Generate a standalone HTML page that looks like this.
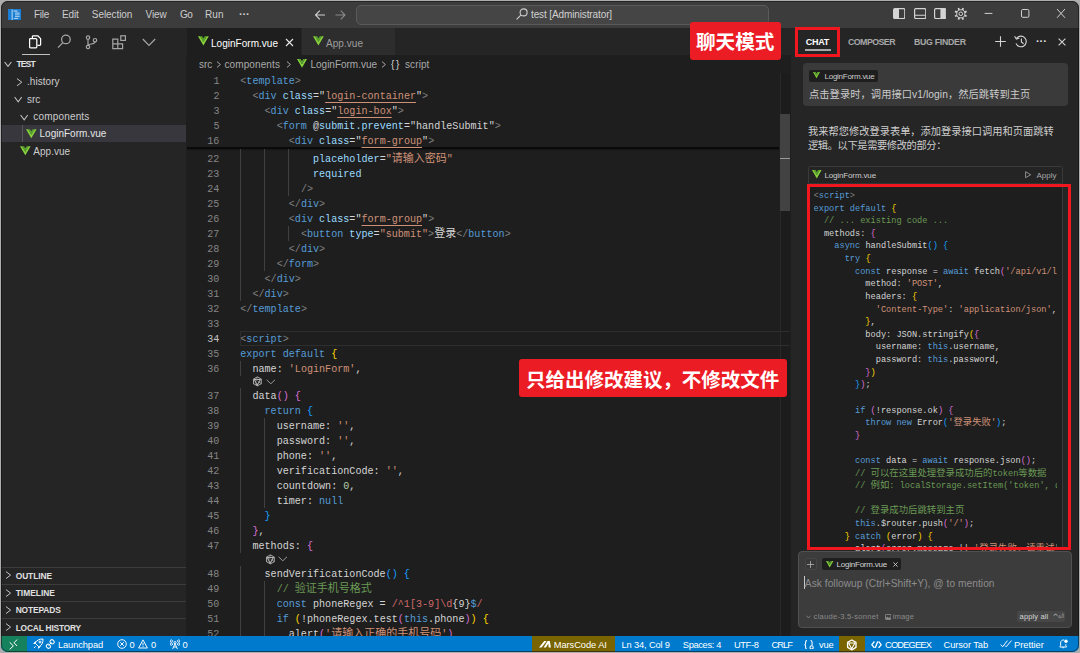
<!DOCTYPE html>
<html lang="zh"><head><meta charset="utf-8"><title>test [Administrator]</title>
<style>
html,body{margin:0;padding:0;}
body{width:1080px;height:653px;overflow:hidden;background:#adadad;font-family:"Liberation Sans","Noto Sans CJK SC",sans-serif;position:relative;}
.a{position:absolute;}
.t{white-space:pre;}
#win{position:absolute;left:1px;top:1px;width:1078px;height:651px;border-radius:7px;overflow:hidden;background:#1e1e1e;}
#in{position:absolute;left:-1px;top:-1px;width:1080px;height:653px;}
.code{font-family:"Liberation Mono","Noto Sans CJK SC",monospace;white-space:pre;color:#d4d4d4;}
.ed{font-size:10.1px;line-height:15px;height:15px;}
.ed .z{line-height:0;font-size:11px;font-family:"Noto Sans CJK SC",sans-serif;}
.rp{font-size:8.63px;line-height:12.62px;height:12.62px;}
.rp .z{line-height:0;font-size:9.4px;font-family:"Noto Sans CJK SC",sans-serif;}
.g{color:#808080}.b{color:#569cd6}.at{color:#9cdcfe}.s{color:#ce9178}.w{color:#d4d4d4}
.y{color:#ffd700}.p{color:#da70d6}.B{color:#179fff}.c{color:#6a9955}.n{color:#b5cea8}.r{color:#d16969}
.u{text-decoration:underline;text-decoration-thickness:1px;text-underline-offset:2.9px;text-decoration-skip-ink:none;}
</style></head>
<body><div id="win"><div id="in">
<div class="a" style="left:0px;top:0px;width:1080px;height:27.5px;background:#3c3c3c;"></div>
<div class="a" style="left:0px;top:27.5px;width:186px;height:608px;background:#252526;"></div>
<div class="a" style="left:186px;top:27.5px;width:605px;height:27.5px;background:#252526;"></div>
<div class="a" style="left:186px;top:55px;width:605px;height:581px;background:#1e1e1e;"></div>
<div class="a" style="left:791px;top:27.5px;width:289px;height:608px;background:#252526;"></div>
<div class="a" style="left:0px;top:635.5px;width:1080px;height:18px;background:#007acc;"></div>
<svg class="a" style="left:8px;top:8.8px;" width="13" height="11.4" viewBox="0 0 13 11.4"><rect width="13" height="11.4" fill="#1a7fd4"/><rect x="3.6" y="0.4" width="1.1" height="10.6" fill="#a9d3f3"/><rect x="5.6" y="1.6" width="4" height="0.9" fill="#fff" opacity=".9"/><rect x="7" y="3.6" width="4.6" height="0.9" fill="#fff" opacity=".8"/><rect x="7" y="5.4" width="4.6" height="0.9" fill="#fff" opacity=".7"/><rect x="7" y="7.2" width="4.6" height="0.9" fill="#fff" opacity=".7"/><rect x="5.8" y="9" width="4.4" height="0.9" fill="#fff" opacity=".7"/></svg>
<span class="a t" style="letter-spacing:-0.281px;top:7.90px;font-size:10px;line-height:14px;color:#cccccc;left:34px;">File</span>
<span class="a t" style="letter-spacing:-0.159px;top:7.90px;font-size:10px;line-height:14px;color:#cccccc;left:62px;">Edit</span>
<span class="a t" style="letter-spacing:-0.071px;top:7.90px;font-size:10px;line-height:14px;color:#cccccc;left:91.8px;">Selection</span>
<span class="a t" style="letter-spacing:-0.100px;top:7.90px;font-size:10px;line-height:14px;color:#cccccc;left:145.5px;">View</span>
<span class="a t" style="letter-spacing:-0.422px;top:7.90px;font-size:10px;line-height:14px;color:#cccccc;left:180px;">Go</span>
<span class="a t" style="letter-spacing:0.047px;top:7.90px;font-size:10px;line-height:14px;color:#cccccc;left:205px;">Run</span>
<span class="a t" style="letter-spacing:-0.167px;top:7.20px;font-size:11px;line-height:14px;color:#cccccc;left:239px;font-weight:bold;">···</span>
<svg class="a" style="left:314px;top:9px;" width="34" height="12" viewBox="0 0 34 12"><g fill="none" stroke="#d0d0d0" stroke-width="1.1"><path d="M1.5 6H11M5.8 1.6 1.5 6l4.3 4.4"/></g><g fill="none" stroke="#8a8a8a" stroke-width="1.1"><path d="M21.5 6H31M26.7 1.6 31 6l-4.3 4.4"/></g></svg>
<div class="a" style="left:356px;top:5px;width:413px;height:19.5px;background:#454545;border:1px solid #5a5a5a;border-radius:5px;box-sizing:border-box;"></div>
<svg class="a" style="left:516px;top:8.2px;" width="12" height="12" viewBox="0 0 12 12"><g fill="none" stroke="#cfcfcf" stroke-width="1.1"><circle cx="7.6" cy="4.4" r="3.5"/><path d="M5.1 6.9.6 11.4"/></g></svg>
<span class="a t" style="letter-spacing:-0.118px;top:8.10px;font-size:10px;line-height:14px;color:#d0d0d0;left:531px;">test [Administrator]</span>
<svg class="a" style="left:893px;top:8.3px;" width="12.4" height="11.2" viewBox="0 0 12.4 11.2"><rect x=".6" y=".6" width="11.2" height="10" rx="1.3" fill="none" stroke="#d4d4d4" stroke-width="1.2"/><rect x="1" y="1" width="5" height="9.2" fill="#d4d4d4"/></svg>
<svg class="a" style="left:913.6px;top:8.3px;" width="12.4" height="11.2" viewBox="0 0 12.4 11.2"><rect x=".6" y=".6" width="11.2" height="10" rx="1.3" fill="none" stroke="#d4d4d4" stroke-width="1.2"/><path d="M.6 7.2H11.8" stroke="#d4d4d4" stroke-width="1.1"/></svg>
<svg class="a" style="left:934px;top:8.3px;" width="12.4" height="11.2" viewBox="0 0 12.4 11.2"><rect x=".6" y=".6" width="11.2" height="10" rx="1.3" fill="none" stroke="#d4d4d4" stroke-width="1.2"/><rect x="6.4" y="1" width="5" height="9.2" fill="#d4d4d4"/></svg>
<svg class="a" style="left:954px;top:7px;" width="13.6" height="13.6" viewBox="0 0 13.6 13.6"><g fill="none" stroke="#d4d4d4"><g stroke-width="1.7"><path d="M10.77 8.45L12.62 9.21"/><path d="M8.45 10.77L9.21 12.62"/><path d="M5.15 10.77L4.39 12.62"/><path d="M2.83 8.45L0.98 9.21"/><path d="M2.83 5.15L0.98 4.39"/><path d="M5.15 2.83L4.39 0.98"/><path d="M8.45 2.83L9.21 0.98"/><path d="M10.77 5.15L12.62 4.39"/></g><circle cx="6.8" cy="6.8" r="4.1" stroke-width="1"/><circle cx="6.8" cy="6.8" r="1.8" stroke-width="1"/></g></svg>
<svg class="a" style="left:984px;top:8px;" width="84" height="12" viewBox="0 0 84 12"><g fill="none" stroke="#d0d0d0" stroke-width="1"><path d="M.6 5.4H8.4"/><rect x="37.5" y="1.5" width="7.4" height="7.8" rx="1.2"/><path d="M73 1 81 9.8M81 1 73 9.8"/></g></svg>
<svg class="a" style="left:28.4px;top:35px;" width="14" height="14" viewBox="0 0 14 14"><g fill="none" stroke="#ffffff" stroke-width="1.25" stroke-linejoin="round"><path d="M4.4 3.2V1.6a.8.8 0 0 1 .8-.8h4.6L12.6 3.6v6a.8.8 0 0 1-.8.8H9.4"/><path d="M1.8 3.4h5.6a.8.8 0 0 1 .8.8v7.6a.8.8 0 0 1-.8.8H1.8a.8.8 0 0 1-.8-.8V4.2a.8.8 0 0 1 .8-.8z" transform="translate(.6 .2)"/></g></svg>
<svg class="a" style="left:56.5px;top:34px;" width="15" height="15" viewBox="0 0 15 15"><g fill="none" stroke="#a6a6a6" stroke-width="1.25"><circle cx="8.9" cy="5.4" r="4.3"/><path d="M5.9 8.6 1 13.6"/></g></svg>
<svg class="a" style="left:85px;top:34.5px;" width="13" height="15" viewBox="0 0 13 15"><g fill="none" stroke="#a6a6a6" stroke-width="1.2"><circle cx="3" cy="2.6" r="1.7"/><circle cx="3" cy="12" r="1.7"/><circle cx="10" cy="5.2" r="1.7"/><path d="M3 4.3v6M10 6.9c0 2.6-7 1.6-7 3.6"/></g></svg>
<svg class="a" style="left:112px;top:34.5px;" width="15" height="15" viewBox="0 0 15 15"><g fill="none" stroke="#a6a6a6" stroke-width="1.2"><path d="M.8 4.2h5v9.4h-5zM.8 8.8h9.8v4.8H.8M5.8 8.8h4.8v4.8"/><rect x="8.8" y=".8" width="4.6" height="4.6"/></g></svg>
<svg class="a" style="left:141.5px;top:38px;" width="14" height="9" viewBox="0 0 14 9"><path d="M.8 1 7 7.4 13.2 1" fill="none" stroke="#a6a6a6" stroke-width="1.2"/></svg>
<div class="a" style="left:22px;top:53.8px;width:28px;height:1.4px;background:#c0c0c0;"></div>
<svg class="a" style="left:4.2px;top:60.400000000000006px;" width="8" height="8" viewBox="0 0 8 8"><path d="M.6 2 4.0 6.4 7.4 2" fill="none" stroke="#c5c5c5" stroke-width="1.05"/></svg>
<span class="a t" style="letter-spacing:-0.892px;top:57.20px;font-size:8.6px;line-height:14px;color:#e0e0e0;left:16.4px;font-weight:bold;">TEST</span>
<svg class="a" style="left:14.6px;top:77.6px;" width="8.4" height="8.4" viewBox="0 0 8.4 8.4"><path d="M2 .6 6.800000000000001 4.2 2 7.800000000000001" fill="none" stroke="#c5c5c5" stroke-width="1"/></svg>
<span class="a t" style="letter-spacing:0.046px;top:75.20px;font-size:10px;line-height:14px;color:#cccccc;left:27px;">.history</span>
<svg class="a" style="left:13.8px;top:95.2px;" width="8.4" height="8.4" viewBox="0 0 8.4 8.4"><path d="M.6 2 4.2 6.800000000000001 7.800000000000001 2" fill="none" stroke="#c5c5c5" stroke-width="1.05"/></svg>
<span class="a t" style="letter-spacing:-0.015px;top:92.70px;font-size:10px;line-height:14px;color:#cccccc;left:27px;">src</span>
<svg class="a" style="left:19.8px;top:112.6px;" width="8.4" height="8.4" viewBox="0 0 8.4 8.4"><path d="M.6 2 4.2 6.800000000000001 7.800000000000001 2" fill="none" stroke="#c5c5c5" stroke-width="1.05"/></svg>
<span class="a t" style="letter-spacing:0.172px;top:110.10px;font-size:10px;line-height:14px;color:#cccccc;left:33.3px;">components</span>
<div class="a" style="left:1px;top:125px;width:185px;height:17px;background:#37373d;"></div>
<div class="a" style="left:22px;top:125px;width:1px;height:17px;background:#585858;"></div>
<svg class="a" style="left:26.2px;top:128.683px;overflow:visible;" width="10.6" height="9.434" viewBox="0 0 20 17.3"><path d="M0 0h3.9L10 10.4 16.1 0H20L10 17.3z" fill="#86d13c"/><path d="M3.9 0h3.6L10 4.4 12.5 0h3.6L10 10.4z" fill="#5aa52c"/></svg>
<span class="a t" style="letter-spacing:0.007px;top:127.40px;font-size:10px;line-height:14px;color:#e6e6e6;left:39.5px;">LoginForm.vue</span>
<svg class="a" style="left:19.8px;top:146.183px;overflow:visible;" width="10.6" height="9.434" viewBox="0 0 20 17.3"><path d="M0 0h3.9L10 10.4 16.1 0H20L10 17.3z" fill="#86d13c"/><path d="M3.9 0h3.6L10 4.4 12.5 0h3.6L10 10.4z" fill="#5aa52c"/></svg>
<span class="a t" style="letter-spacing:0.014px;top:144.90px;font-size:10px;line-height:14px;color:#cccccc;left:33.3px;">App.vue</span>
<div class="a" style="left:1px;top:566.5px;width:185px;height:1px;background:#3c3c3c;"></div>
<svg class="a" style="left:4px;top:571.4px;" width="8.2" height="8.2" viewBox="0 0 8.2 8.2"><path d="M2 .6 6.6 4.1 2 7.6" fill="none" stroke="#c5c5c5" stroke-width="1"/></svg>
<span class="a t" style="letter-spacing:-0.067px;top:568.70px;font-size:8.4px;line-height:14px;color:#e0e0e0;left:15.7px;font-weight:bold;">OUTLINE</span>
<div class="a" style="left:1px;top:583.8px;width:185px;height:1px;background:#3c3c3c;"></div>
<svg class="a" style="left:4px;top:588.6999999999999px;" width="8.2" height="8.2" viewBox="0 0 8.2 8.2"><path d="M2 .6 6.6 4.1 2 7.6" fill="none" stroke="#c5c5c5" stroke-width="1"/></svg>
<span class="a t" style="letter-spacing:0.026px;top:586.00px;font-size:8.4px;line-height:14px;color:#e0e0e0;left:15.7px;font-weight:bold;">TIMELINE</span>
<div class="a" style="left:1px;top:601.1px;width:185px;height:1px;background:#3c3c3c;"></div>
<svg class="a" style="left:4px;top:606.0px;" width="8.2" height="8.2" viewBox="0 0 8.2 8.2"><path d="M2 .6 6.6 4.1 2 7.6" fill="none" stroke="#c5c5c5" stroke-width="1"/></svg>
<span class="a t" style="letter-spacing:-0.115px;top:603.30px;font-size:8.4px;line-height:14px;color:#e0e0e0;left:15.7px;font-weight:bold;">NOTEPADS</span>
<div class="a" style="left:1px;top:618.4px;width:185px;height:1px;background:#3c3c3c;"></div>
<svg class="a" style="left:4px;top:623.3px;" width="8.2" height="8.2" viewBox="0 0 8.2 8.2"><path d="M2 .6 6.6 4.1 2 7.6" fill="none" stroke="#c5c5c5" stroke-width="1"/></svg>
<span class="a t" style="letter-spacing:-0.191px;top:620.60px;font-size:8.4px;line-height:14px;color:#e0e0e0;left:15.7px;font-weight:bold;">LOCAL HISTORY</span>
<div class="a" style="left:187px;top:27.5px;width:114.5px;height:27.5px;background:#1e1e1e;"></div>
<div class="a" style="left:301.5px;top:27.5px;width:93.5px;height:27.5px;background:#2d2d2d;"></div>
<div class="a" style="left:301px;top:27.5px;width:1px;height:27.5px;background:#252526;"></div>
<svg class="a" style="left:198px;top:35.794000000000004px;overflow:visible;" width="10.8" height="9.612" viewBox="0 0 20 17.3"><path d="M0 0h3.9L10 10.4 16.1 0H20L10 17.3z" fill="#86d13c"/><path d="M3.9 0h3.6L10 4.4 12.5 0h3.6L10 10.4z" fill="#5aa52c"/></svg>
<span class="a t" style="letter-spacing:0.023px;top:36.50px;font-size:10px;line-height:14px;color:#ffffff;left:211px;">LoginForm.vue</span>
<svg class="a" style="left:285px;top:37.8px;" width="9" height="9" viewBox="0 0 9 9"><path d="M1 1 8 8M8 1 1 8" stroke="#e8e8e8" stroke-width="1.1" fill="none"/></svg>
<svg class="a" style="left:313.4px;top:35.794000000000004px;overflow:visible;" width="10.8" height="9.612" viewBox="0 0 20 17.3"><path d="M0 0h3.9L10 10.4 16.1 0H20L10 17.3z" fill="#86d13c"/><path d="M3.9 0h3.6L10 4.4 12.5 0h3.6L10 10.4z" fill="#5aa52c"/></svg>
<span class="a t" style="letter-spacing:0.042px;top:36.50px;font-size:10px;line-height:14px;color:#9d9d9d;left:326px;">App.vue</span>
<span class="a t" style="letter-spacing:-0.015px;top:58.20px;font-size:10px;line-height:14px;color:#a9a9a9;left:199px;">src</span>
<svg class="a" style="left:215px;top:61.099999999999994px;" width="7" height="7" viewBox="0 0 7 7"><path d="M2 .6 5.4 3.5 2 6.4" fill="none" stroke="#a9a9a9" stroke-width="1"/></svg>
<span class="a t" style="letter-spacing:0.102px;top:58.20px;font-size:10px;line-height:14px;color:#a9a9a9;left:224.5px;">components</span>
<svg class="a" style="left:284.5px;top:61.099999999999994px;" width="7" height="7" viewBox="0 0 7 7"><path d="M2 .6 5.4 3.5 2 6.4" fill="none" stroke="#a9a9a9" stroke-width="1"/></svg>
<svg class="a" style="left:297px;top:59.15px;overflow:visible;" width="10" height="8.9" viewBox="0 0 20 17.3"><path d="M0 0h3.9L10 10.4 16.1 0H20L10 17.3z" fill="#86d13c"/><path d="M3.9 0h3.6L10 4.4 12.5 0h3.6L10 10.4z" fill="#5aa52c"/></svg>
<span class="a t" style="letter-spacing:-0.016px;top:58.20px;font-size:10px;line-height:14px;color:#a9a9a9;left:310.5px;">LoginForm.vue</span>
<svg class="a" style="left:380px;top:61.099999999999994px;" width="7" height="7" viewBox="0 0 7 7"><path d="M2 .6 5.4 3.5 2 6.4" fill="none" stroke="#a9a9a9" stroke-width="1"/></svg>
<span class="a t" style="letter-spacing:1.656px;top:57.90px;font-size:10px;line-height:14px;color:#cfcfcf;left:391px;">{}</span>
<span class="a t" style="letter-spacing:0.099px;top:58.20px;font-size:10px;line-height:14px;color:#a9a9a9;left:405px;">script</span>
<span class="a t" style="top:151.60px;font-size:10.05px;line-height:15px;color:#858585;right:860.60px;font-family:'Liberation Mono','Noto Sans CJK SC',monospace;">22</span>
<div class="a code ed" style="left:240.3px;top:151.60px;">            <span class="at">placeholder</span><span class="w">=</span><span class="s">"<span class="z">请输入密码</span>"</span></div>
<span class="a t" style="top:166.60px;font-size:10.05px;line-height:15px;color:#858585;right:860.60px;font-family:'Liberation Mono','Noto Sans CJK SC',monospace;">23</span>
<div class="a code ed" style="left:240.3px;top:166.60px;">            <span class="at">required</span></div>
<span class="a t" style="top:181.60px;font-size:10.05px;line-height:15px;color:#858585;right:860.60px;font-family:'Liberation Mono','Noto Sans CJK SC',monospace;">24</span>
<div class="a code ed" style="left:240.3px;top:181.60px;">          <span class="g">/&gt;</span></div>
<span class="a t" style="top:196.60px;font-size:10.05px;line-height:15px;color:#858585;right:860.60px;font-family:'Liberation Mono','Noto Sans CJK SC',monospace;">25</span>
<div class="a code ed" style="left:240.3px;top:196.60px;">        <span class="g">&lt;/</span><span class="b">div</span><span class="g">&gt;</span></div>
<span class="a t" style="top:211.60px;font-size:10.05px;line-height:15px;color:#858585;right:860.60px;font-family:'Liberation Mono','Noto Sans CJK SC',monospace;">26</span>
<div class="a code ed" style="left:240.3px;top:211.60px;">        <span class="g">&lt;</span><span class="b">div</span> <span class="at">class</span><span class="w">="</span><span class="s u">form-group</span><span class="w">"</span><span class="g">&gt;</span></div>
<span class="a t" style="top:226.60px;font-size:10.05px;line-height:15px;color:#858585;right:860.60px;font-family:'Liberation Mono','Noto Sans CJK SC',monospace;">27</span>
<div class="a code ed" style="left:240.3px;top:226.60px;">          <span class="g">&lt;</span><span class="b">button</span> <span class="at">type</span><span class="w">=</span><span class="s">"submit"</span><span class="g">&gt;</span><span class="w"><span class="z">登录</span></span><span class="g">&lt;/</span><span class="b">button</span><span class="g">&gt;</span></div>
<span class="a t" style="top:241.60px;font-size:10.05px;line-height:15px;color:#858585;right:860.60px;font-family:'Liberation Mono','Noto Sans CJK SC',monospace;">28</span>
<div class="a code ed" style="left:240.3px;top:241.60px;">        <span class="g">&lt;/</span><span class="b">div</span><span class="g">&gt;</span></div>
<span class="a t" style="top:256.60px;font-size:10.05px;line-height:15px;color:#858585;right:860.60px;font-family:'Liberation Mono','Noto Sans CJK SC',monospace;">29</span>
<div class="a code ed" style="left:240.3px;top:256.60px;">      <span class="g">&lt;/</span><span class="b">form</span><span class="g">&gt;</span></div>
<span class="a t" style="top:271.60px;font-size:10.05px;line-height:15px;color:#858585;right:860.60px;font-family:'Liberation Mono','Noto Sans CJK SC',monospace;">30</span>
<div class="a code ed" style="left:240.3px;top:271.60px;">    <span class="g">&lt;/</span><span class="b">div</span><span class="g">&gt;</span></div>
<span class="a t" style="top:286.60px;font-size:10.05px;line-height:15px;color:#858585;right:860.60px;font-family:'Liberation Mono','Noto Sans CJK SC',monospace;">31</span>
<div class="a code ed" style="left:240.3px;top:286.60px;">  <span class="g">&lt;/</span><span class="b">div</span><span class="g">&gt;</span></div>
<span class="a t" style="top:301.60px;font-size:10.05px;line-height:15px;color:#858585;right:860.60px;font-family:'Liberation Mono','Noto Sans CJK SC',monospace;">32</span>
<div class="a code ed" style="left:240.3px;top:301.60px;"><span class="g">&lt;/</span><span class="b">template</span><span class="g">&gt;</span></div>
<span class="a t" style="top:316.60px;font-size:10.05px;line-height:15px;color:#858585;right:860.60px;font-family:'Liberation Mono','Noto Sans CJK SC',monospace;">33</span>
<div class="a code ed" style="left:240.3px;top:316.60px;"></div>
<span class="a t" style="top:331.60px;font-size:10.05px;line-height:15px;color:#c6c6c6;right:860.60px;font-family:'Liberation Mono','Noto Sans CJK SC',monospace;">34</span>
<div class="a code ed" style="left:240.3px;top:331.60px;"><span class="g">&lt;</span><span class="b">script</span><span class="g">&gt;</span></div>
<span class="a t" style="top:346.60px;font-size:10.05px;line-height:15px;color:#858585;right:860.60px;font-family:'Liberation Mono','Noto Sans CJK SC',monospace;">35</span>
<div class="a code ed" style="left:240.3px;top:346.60px;"><span class="b">export default</span> <span class="y">{</span></div>
<span class="a t" style="top:361.60px;font-size:10.05px;line-height:15px;color:#858585;right:860.60px;font-family:'Liberation Mono','Noto Sans CJK SC',monospace;">36</span>
<div class="a code ed" style="left:240.3px;top:361.60px;">  name: <span class="s">'LoginForm'</span>,</div>
<span class="a t" style="top:388.60px;font-size:10.05px;line-height:15px;color:#858585;right:860.60px;font-family:'Liberation Mono','Noto Sans CJK SC',monospace;">37</span>
<div class="a code ed" style="left:240.3px;top:388.60px;">  data<span class="p">()</span> <span class="p">{</span></div>
<span class="a t" style="top:403.60px;font-size:10.05px;line-height:15px;color:#858585;right:860.60px;font-family:'Liberation Mono','Noto Sans CJK SC',monospace;">38</span>
<div class="a code ed" style="left:240.3px;top:403.60px;">    <span class="b">return</span> <span class="B">{</span></div>
<span class="a t" style="top:418.60px;font-size:10.05px;line-height:15px;color:#858585;right:860.60px;font-family:'Liberation Mono','Noto Sans CJK SC',monospace;">39</span>
<div class="a code ed" style="left:240.3px;top:418.60px;">      username: <span class="s">''</span>,</div>
<span class="a t" style="top:433.60px;font-size:10.05px;line-height:15px;color:#858585;right:860.60px;font-family:'Liberation Mono','Noto Sans CJK SC',monospace;">40</span>
<div class="a code ed" style="left:240.3px;top:433.60px;">      password: <span class="s">''</span>,</div>
<span class="a t" style="top:448.60px;font-size:10.05px;line-height:15px;color:#858585;right:860.60px;font-family:'Liberation Mono','Noto Sans CJK SC',monospace;">41</span>
<div class="a code ed" style="left:240.3px;top:448.60px;">      phone: <span class="s">''</span>,</div>
<span class="a t" style="top:463.60px;font-size:10.05px;line-height:15px;color:#858585;right:860.60px;font-family:'Liberation Mono','Noto Sans CJK SC',monospace;">42</span>
<div class="a code ed" style="left:240.3px;top:463.60px;">      verificationCode: <span class="s">''</span>,</div>
<span class="a t" style="top:478.60px;font-size:10.05px;line-height:15px;color:#858585;right:860.60px;font-family:'Liberation Mono','Noto Sans CJK SC',monospace;">43</span>
<div class="a code ed" style="left:240.3px;top:478.60px;">      countdown: <span class="n">0</span>,</div>
<span class="a t" style="top:493.60px;font-size:10.05px;line-height:15px;color:#858585;right:860.60px;font-family:'Liberation Mono','Noto Sans CJK SC',monospace;">44</span>
<div class="a code ed" style="left:240.3px;top:493.60px;">      timer: <span class="b">null</span></div>
<span class="a t" style="top:508.60px;font-size:10.05px;line-height:15px;color:#858585;right:860.60px;font-family:'Liberation Mono','Noto Sans CJK SC',monospace;">45</span>
<div class="a code ed" style="left:240.3px;top:508.60px;">    <span class="B">}</span></div>
<span class="a t" style="top:523.60px;font-size:10.05px;line-height:15px;color:#858585;right:860.60px;font-family:'Liberation Mono','Noto Sans CJK SC',monospace;">46</span>
<div class="a code ed" style="left:240.3px;top:523.60px;">  <span class="p">}</span>,</div>
<span class="a t" style="top:538.60px;font-size:10.05px;line-height:15px;color:#858585;right:860.60px;font-family:'Liberation Mono','Noto Sans CJK SC',monospace;">47</span>
<div class="a code ed" style="left:240.3px;top:538.60px;">  methods: <span class="p">{</span></div>
<span class="a t" style="top:566.60px;font-size:10.05px;line-height:15px;color:#858585;right:860.60px;font-family:'Liberation Mono','Noto Sans CJK SC',monospace;">48</span>
<div class="a code ed" style="left:240.3px;top:566.60px;">    sendVerificationCode<span class="B">()</span> <span class="B">{</span></div>
<span class="a t" style="top:581.60px;font-size:10.05px;line-height:15px;color:#858585;right:860.60px;font-family:'Liberation Mono','Noto Sans CJK SC',monospace;">49</span>
<div class="a code ed" style="left:240.3px;top:581.60px;"><span class="c">      // <span class="z">验证手机号格式</span></span></div>
<span class="a t" style="top:596.60px;font-size:10.05px;line-height:15px;color:#858585;right:860.60px;font-family:'Liberation Mono','Noto Sans CJK SC',monospace;">50</span>
<div class="a code ed" style="left:240.3px;top:596.60px;">      <span class="b">const</span> phoneRegex = <span class="r">/^1[3-9]\d</span><span class="w">{9}</span><span class="b">$</span><span class="r">/</span></div>
<span class="a t" style="top:611.60px;font-size:10.05px;line-height:15px;color:#858585;right:860.60px;font-family:'Liberation Mono','Noto Sans CJK SC',monospace;">51</span>
<div class="a code ed" style="left:240.3px;top:611.60px;">      <span class="b">if</span> <span class="y">(</span>!phoneRegex.test<span class="p">(</span><span class="b">this</span>.phone<span class="p">)</span><span class="y">)</span> <span class="y">{</span></div>
<span class="a t" style="top:626.60px;font-size:10.05px;line-height:15px;color:#858585;right:860.60px;font-family:'Liberation Mono','Noto Sans CJK SC',monospace;">52</span>
<div class="a code ed" style="left:240.3px;top:626.60px;">        alert<span class="p">(</span><span class="s">'<span class="z">请输入正确的手机号码</span>'</span><span class="p">)</span></div>
<div class="a" style="left:187px;top:147.4px;width:592px;height:1.4px;background:#0a0a0a;"></div>
<div class="a" style="left:187px;top:148.8px;width:592px;height:2px;background:linear-gradient(#141414,#1e1e1e);"></div>
<span class="a t" style="top:73.60px;font-size:10.05px;line-height:15px;color:#858585;right:860.60px;font-family:'Liberation Mono','Noto Sans CJK SC',monospace;">1</span>
<div class="a code ed" style="left:240.3px;top:73.60px;"><span class="g">&lt;</span><span class="b">template</span><span class="g">&gt;</span></div>
<span class="a t" style="top:88.60px;font-size:10.05px;line-height:15px;color:#858585;right:860.60px;font-family:'Liberation Mono','Noto Sans CJK SC',monospace;">2</span>
<div class="a code ed" style="left:240.3px;top:88.60px;">  <span class="g">&lt;</span><span class="b">div</span> <span class="at">class</span><span class="w">="</span><span class="s u">login-container</span><span class="w">"</span><span class="g">&gt;</span></div>
<span class="a t" style="top:103.60px;font-size:10.05px;line-height:15px;color:#858585;right:860.60px;font-family:'Liberation Mono','Noto Sans CJK SC',monospace;">3</span>
<div class="a code ed" style="left:240.3px;top:103.60px;">    <span class="g">&lt;</span><span class="b">div</span> <span class="at">class</span><span class="w">="</span><span class="s u">login-box</span><span class="w">"</span><span class="g">&gt;</span></div>
<span class="a t" style="top:118.60px;font-size:10.05px;line-height:15px;color:#858585;right:860.60px;font-family:'Liberation Mono','Noto Sans CJK SC',monospace;">5</span>
<div class="a code ed" style="left:240.3px;top:118.60px;">      <span class="g">&lt;</span><span class="b">form</span> <span class="w">@</span><span class="at">submit.prevent</span><span class="w">="handleSubmit"</span><span class="g">&gt;</span></div>
<span class="a t" style="top:133.60px;font-size:10.05px;line-height:15px;color:#858585;right:860.60px;font-family:'Liberation Mono','Noto Sans CJK SC',monospace;">16</span>
<div class="a code ed" style="left:240.3px;top:133.60px;">        <span class="g">&lt;</span><span class="b">div</span> <span class="at">class</span><span class="w">="</span><span class="s u">form-group</span><span class="w">"</span><span class="g">&gt;</span></div>
<div class="a" style="left:240px;top:149px;width:1px;height:152.0px;background:#404040;"></div>
<div class="a" style="left:264px;top:149px;width:1px;height:122.0px;background:#404040;"></div>
<div class="a" style="left:288px;top:149px;width:1px;height:47.0px;background:#404040;"></div>
<div class="a" style="left:288px;top:226.0px;width:1px;height:15.0px;background:#404040;"></div>
<div class="a" style="left:240px;top:361.0px;width:1px;height:15.0px;background:#404040;"></div>
<div class="a" style="left:240px;top:388.0px;width:1px;height:165.0px;background:#404040;"></div>
<div class="a" style="left:240px;top:566.0px;width:1px;height:70.0px;background:#404040;"></div>
<div class="a" style="left:264px;top:418.0px;width:1px;height:90.0px;background:#404040;"></div>
<div class="a" style="left:264px;top:581.0px;width:1px;height:55.0px;background:#404040;"></div>
<svg class="a" style="left:252.4px;top:376.0px;" width="10.8" height="10.8" viewBox="0 0 10.8 10.8"><g fill="none" stroke="#a4a4a4" stroke-width="1.05" stroke-linejoin="round"><path d="M5.4 .9 9.3 3.15V7.65L5.4 9.9 1.5 7.65V3.15z"/><path d="M2.3 3.6H8.4L5.2 9.2z" stroke="#b8b8b8"/><path d="M5.4 .9 3.6 6.2M9.3 7.65 5.6 5.2" stroke="#9a9a9a" stroke-width=".8"/></g></svg>
<svg class="a" style="left:265.8px;top:378.5px;" width="9.6" height="5.6" viewBox="0 0 9.6 5.6"><path d="M.6 .8 4.8 4.8 9 .8" fill="none" stroke="#9c9c9c" stroke-width="1"/></svg>
<svg class="a" style="left:264.8px;top:553.8000000000001px;" width="10.8" height="10.8" viewBox="0 0 10.8 10.8"><g fill="none" stroke="#a4a4a4" stroke-width="1.05" stroke-linejoin="round"><path d="M5.4 .9 9.3 3.15V7.65L5.4 9.9 1.5 7.65V3.15z"/><path d="M2.3 3.6H8.4L5.2 9.2z" stroke="#b8b8b8"/><path d="M5.4 .9 3.6 6.2M9.3 7.65 5.6 5.2" stroke="#9a9a9a" stroke-width=".8"/></g></svg>
<svg class="a" style="left:278.2px;top:556.3000000000001px;" width="9.6" height="5.6" viewBox="0 0 9.6 5.6"><path d="M.6 .8 4.8 4.8 9 .8" fill="none" stroke="#9c9c9c" stroke-width="1"/></svg>
<div class="a" style="left:779.5px;top:72.5px;width:10.7px;height:563.5px;background:#1c1c1c;"></div>
<div class="a" style="left:779.5px;top:72.5px;width:1px;height:563.5px;background:#282828;"></div>
<div class="a" style="left:779.5px;top:114.3px;width:10.8px;height:97.2px;background:#424242;"></div>
<div class="a" style="left:779.5px;top:157.5px;width:10.8px;height:1.2px;background:#9a9a9a;"></div>
<div class="a" style="left:240px;top:330.5px;width:550px;height:1px;background:#2e2e2e;"></div>
<div class="a" style="left:240px;top:344.5px;width:550px;height:1px;background:#2e2e2e;"></div>
<div class="a" style="left:240px;top:330.5px;width:1px;height:15px;background:#2e2e2e;"></div>
<span class="a t" style="letter-spacing:-0.307px;top:34.80px;font-size:9px;line-height:14px;color:#ffffff;left:805.8px;font-weight:bold;">CHAT</span>
<div class="a" style="left:804.8px;top:49.3px;width:26px;height:1.7px;background:#a8a8a8;"></div>
<span class="a t" style="letter-spacing:-0.541px;top:34.80px;font-size:8.8px;line-height:14px;color:#a8a8a8;left:848px;font-weight:bold;">COMPOSER</span>
<span class="a t" style="letter-spacing:-0.305px;top:34.80px;font-size:8.8px;line-height:14px;color:#a8a8a8;left:914px;font-weight:bold;">BUG FINDER</span>
<div class="a" style="left:795px;top:26.7px;width:45.3px;height:30.3px;border:3px solid #f2161f;box-sizing:border-box;"></div>
<svg class="a" style="left:994.5px;top:36px;" width="11" height="11" viewBox="0 0 11 11"><path d="M5.5 .2V10.8M.2 5.5H10.8" stroke="#d4d4d4" stroke-width="1.1"/></svg>
<svg class="a" style="left:1013.5px;top:34.8px;" width="14" height="13" viewBox="0 0 14 13"><g fill="none" stroke="#d4d4d4" stroke-width="1.1"><path d="M2.6 3.4A5.3 5.3 0 1 1 2 8.4"/><path d="M.6 1.2 2.4 4 5.4 3"/><path d="M7.4 3.6V7l2.2 1.8"/></g></svg>
<span class="a t" style="letter-spacing:-0.100px;top:34.00px;font-size:11px;line-height:14px;color:#e0e0e0;left:1036px;font-weight:bold;">···</span>
<svg class="a" style="left:1058px;top:37.6px;" width="8" height="8" viewBox="0 0 8 8"><path d="M.6.6 7.4 7.4M7.4.6.6 7.4" stroke="#d4d4d4" stroke-width="1.1"/></svg>
<div class="a" style="left:803px;top:63px;width:264.5px;height:43px;background:#3a3a3a;border-radius:4px;"></div>
<div class="a" style="left:809px;top:69.5px;width:69px;height:12.5px;background:#1e1e1e;border-radius:2px;"></div>
<svg class="a" style="left:813.4px;top:72.485px;overflow:visible;" width="7" height="6.23" viewBox="0 0 20 17.3"><path d="M0 0h3.9L10 10.4 16.1 0H20L10 17.3z" fill="#86d13c"/><path d="M3.9 0h3.6L10 4.4 12.5 0h3.6L10 10.4z" fill="#5aa52c"/></svg>
<span class="a t" style="letter-spacing:-0.258px;top:69.70px;font-size:8px;line-height:14px;color:#cccccc;left:824.5px;">LoginForm.vue</span>
<span class="a t" style="letter-spacing:0.073px;top:88.00px;font-size:10.24px;line-height:14px;color:#cccccc;left:809px;">点击登录时，调用接口v1/login，然后跳转到主页</span>
<span class="a t" style="letter-spacing:0.003px;top:125.30px;font-size:10.24px;line-height:14px;color:#cecece;left:808px;">我来帮您修改登录表单，添加登录接口调用和页面跳转</span>
<span class="a t" style="letter-spacing:-0.377px;top:138.90px;font-size:10.24px;line-height:14px;color:#cecece;left:808px;">逻辑。以下是需要修改的部分：</span>
<div class="a" style="left:808.3px;top:166.3px;width:255px;height:384px;background:#1e1e1e;border:1px solid #3a3a3a;box-sizing:border-box;border-radius:2px 2px 0 0;"></div>
<div class="a" style="left:809.3px;top:167.3px;width:253px;height:16.5px;background:#242424;"></div>
<div class="a" style="left:808.3px;top:183.3px;width:255px;height:1px;background:#333333;"></div>
<svg class="a" style="left:812.4px;top:170.328px;overflow:visible;" width="9.6" height="8.544" viewBox="0 0 20 17.3"><path d="M0 0h3.9L10 10.4 16.1 0H20L10 17.3z" fill="#86d13c"/><path d="M3.9 0h3.6L10 4.4 12.5 0h3.6L10 10.4z" fill="#5aa52c"/></svg>
<span class="a t" style="letter-spacing:-0.135px;top:168.90px;font-size:8px;line-height:14px;color:#cccccc;left:824.4px;">LoginForm.vue</span>
<svg class="a" style="left:1025px;top:171.4px;" width="6.5" height="7.4" viewBox="0 0 6.5 7.4"><path d="M.6.7 5.8 3.7.6 6.7z" fill="none" stroke="#9a9a9a" stroke-width=".9"/></svg>
<span class="a t" style="letter-spacing:-0.003px;top:168.90px;font-size:8px;line-height:14px;color:#a6a6a6;left:1036.5px;">Apply</span>
<div class="a code rp" style="left:813.6px;top:189.97px;width:243.6px;overflow:hidden;"><span class="g">&lt;</span><span class="b">script</span><span class="g">&gt;</span></div>
<div class="a code rp" style="left:813.6px;top:202.59px;width:243.6px;overflow:hidden;"><span class="b">export default</span> <span class="y">{</span></div>
<div class="a code rp" style="left:813.6px;top:215.21px;width:243.6px;overflow:hidden;"><span class="c">  // ... existing code ...</span></div>
<div class="a code rp" style="left:813.6px;top:227.83px;width:243.6px;overflow:hidden;">  methods: <span class="p">{</span></div>
<div class="a code rp" style="left:813.6px;top:240.45px;width:243.6px;overflow:hidden;">    <span class="b">async</span> handleSubmit<span class="B">()</span> <span class="B">{</span></div>
<div class="a code rp" style="left:813.6px;top:253.07px;width:243.6px;overflow:hidden;">      <span class="b">try</span> <span class="y">{</span></div>
<div class="a code rp" style="left:813.6px;top:265.69px;width:243.6px;overflow:hidden;">        <span class="b">const</span> response = <span class="b">await</span> fetch<span class="p">(</span><span class="s">'/api/v1/login'</span>, <span class="B">{</span></div>
<div class="a code rp" style="left:813.6px;top:278.31px;width:243.6px;overflow:hidden;">          method: <span class="s">'POST'</span>,</div>
<div class="a code rp" style="left:813.6px;top:290.93px;width:243.6px;overflow:hidden;">          headers: <span class="y">{</span></div>
<div class="a code rp" style="left:813.6px;top:303.55px;width:243.6px;overflow:hidden;">            <span class="s">'Content-Type'</span>: <span class="s">'application/json'</span>,</div>
<div class="a code rp" style="left:813.6px;top:316.17px;width:243.6px;overflow:hidden;">          <span class="y">}</span>,</div>
<div class="a code rp" style="left:813.6px;top:328.79px;width:243.6px;overflow:hidden;">          body: JSON.stringify<span class="y">(</span><span class="p">{</span></div>
<div class="a code rp" style="left:813.6px;top:341.41px;width:243.6px;overflow:hidden;">            username: <span class="b">this</span>.username,</div>
<div class="a code rp" style="left:813.6px;top:354.03px;width:243.6px;overflow:hidden;">            password: <span class="b">this</span>.password,</div>
<div class="a code rp" style="left:813.6px;top:366.65px;width:243.6px;overflow:hidden;">          <span class="p">}</span><span class="y">)</span></div>
<div class="a code rp" style="left:813.6px;top:379.27px;width:243.6px;overflow:hidden;">        <span class="B">}</span><span class="p">)</span>;</div>
<div class="a code rp" style="left:813.6px;top:391.89px;width:243.6px;overflow:hidden;"></div>
<div class="a code rp" style="left:813.6px;top:404.51px;width:243.6px;overflow:hidden;">        <span class="b">if</span> <span class="p">(</span>!response.ok<span class="p">)</span> <span class="p">{</span></div>
<div class="a code rp" style="left:813.6px;top:417.13px;width:243.6px;overflow:hidden;">          <span class="b">throw new</span> Error<span class="B">(</span><span class="s">'<span class="z">登录失败</span>'</span><span class="B">)</span>;</div>
<div class="a code rp" style="left:813.6px;top:429.75px;width:243.6px;overflow:hidden;">        <span class="p">}</span></div>
<div class="a code rp" style="left:813.6px;top:442.37px;width:243.6px;overflow:hidden;"></div>
<div class="a code rp" style="left:813.6px;top:454.99px;width:243.6px;overflow:hidden;">        <span class="b">const</span> data = <span class="b">await</span> response.json<span class="p">()</span>;</div>
<div class="a code rp" style="left:813.6px;top:467.61px;width:243.6px;overflow:hidden;"><span class="c">        // <span class="z">可以在这里处理登录成功后的</span>token<span class="z">等数据</span></span></div>
<div class="a code rp" style="left:813.6px;top:480.23px;width:243.6px;overflow:hidden;"><span class="c">        // <span class="z">例如</span>: localStorage.setItem('token', data.token);</span></div>
<div class="a code rp" style="left:813.6px;top:492.85px;width:243.6px;overflow:hidden;"></div>
<div class="a code rp" style="left:813.6px;top:505.47px;width:243.6px;overflow:hidden;"><span class="c">        // <span class="z">登录成功后跳转到主页</span></span></div>
<div class="a code rp" style="left:813.6px;top:518.09px;width:243.6px;overflow:hidden;">        <span class="b">this</span>.$router.push<span class="p">(</span><span class="s">'/'</span><span class="p">)</span>;</div>
<div class="a code rp" style="left:813.6px;top:530.71px;width:243.6px;overflow:hidden;">      <span class="y">}</span> <span class="b">catch</span> <span class="y">(</span>error<span class="y">)</span> <span class="y">{</span></div>
<div class="a code rp" style="left:813.6px;top:543.33px;width:243.6px;overflow:hidden;">        alert<span class="p">(</span>error.message || <span class="s">'<span class="z">登录失败，请重试</span>'</span><span class="p">)</span>;</div>
<div class="a" style="left:807px;top:183.6px;width:263.8px;height:366.4px;border:3px solid #f2161f;box-sizing:border-box;"></div>
<div class="a" style="left:798px;top:551px;width:274px;height:77px;background:#3c3c3c;border:1px solid #505050;box-sizing:border-box;border-radius:4px;"></div>
<div class="a" style="left:804.8px;top:558px;width:12.2px;height:12px;background:#393939;border-radius:2px;border:1px solid #464646;box-sizing:border-box;"></div>
<svg class="a" style="left:807.4px;top:560.5px;" width="7" height="7" viewBox="0 0 7 7"><path d="M3.5 0V7M0 3.5H7" stroke="#b4b4b4" stroke-width=".8"/></svg>
<div class="a" style="left:821.7px;top:558px;width:79.7px;height:12px;background:#1e1e1e;border-radius:2px;"></div>
<svg class="a" style="left:825.6px;top:560.907px;overflow:visible;" width="7.4" height="6.586" viewBox="0 0 20 17.3"><path d="M0 0h3.9L10 10.4 16.1 0H20L10 17.3z" fill="#86d13c"/><path d="M3.9 0h3.6L10 4.4 12.5 0h3.6L10 10.4z" fill="#5aa52c"/></svg>
<span class="a t" style="letter-spacing:-0.220px;top:557.90px;font-size:8px;line-height:14px;color:#d4d4d4;left:836.5px;">LoginForm.vue</span>
<svg class="a" style="left:892.8px;top:561.6px;" width="5" height="5" viewBox="0 0 5 5"><path d="M.4.4 4.6 4.6M4.6.4.4 4.6" stroke="#c8c8c8" stroke-width=".9"/></svg>
<div class="a" style="left:804.2px;top:576px;width:1px;height:13px;background:#c8c8c8;"></div>
<span class="a t" style="letter-spacing:0.040px;top:577.30px;font-size:10.2px;line-height:14px;color:#8c8c8c;left:804.8px;">Ask followup (Ctrl+Shift+Y), @ to mention</span>
<svg class="a" style="left:805.6px;top:615px;" width="5" height="4" viewBox="0 0 5 4"><path d="M.4.6 2.5 3 4.6.6" fill="none" stroke="#8a8a8a" stroke-width=".8"/></svg>
<span class="a t" style="letter-spacing:0.247px;top:609.60px;font-size:7.6px;line-height:14px;color:#8a8a8a;left:813.6px;">claude-3.5-sonnet</span>
<svg class="a" style="left:884.5px;top:613.6px;" width="6.4" height="6" viewBox="0 0 6.4 6"><rect x=".4" y=".4" width="5.6" height="5.2" rx=".8" fill="none" stroke="#9a9a9a" stroke-width=".8"/><path d="M.6 4.8 2.4 3 3.6 4.2 4.4 3.6 5.8 5" fill="#9a9a9a" stroke="#9a9a9a" stroke-width=".6"/></svg>
<span class="a t" style="letter-spacing:0.102px;top:609.60px;font-size:7.6px;line-height:14px;color:#8a8a8a;left:892.8px;">image</span>
<div class="a" style="left:1017px;top:610.7px;width:48px;height:11.5px;background:#474747;border-radius:2px;"></div>
<span class="a t" style="letter-spacing:0.092px;top:610.00px;font-size:7.6px;line-height:14px;color:#d4d4d4;left:1019.6px;">apply all</span>
<span class="a t" style="letter-spacing:-0.523px;top:609.60px;font-size:7.2px;line-height:14px;color:#c0c0c0;left:1052.6px;font-family:'DejaVu Sans',sans-serif;">^⏎</span>
<div class="a" style="left:690px;top:22px;width:91px;height:37.5px;background:#ec1c24;border-radius:3px;"></div>
<span class="a t" style="letter-spacing:0.031px;top:28.80px;font-size:19.6px;line-height:24px;color:#ffffff;left:696px;font-weight:bold;font-family:'Noto Sans CJK SC',sans-serif;">聊天模式</span>
<div class="a" style="left:519.4px;top:359.3px;width:267.2px;height:37.7px;background:#ec1c24;border-radius:3px;"></div>
<span class="a t" style="letter-spacing:-0.017px;top:366.60px;font-size:19.5px;line-height:24px;color:#ffffff;left:526px;font-weight:bold;font-family:'Noto Sans CJK SC',sans-serif;">只给出修改建议，不修改文件</span>
<div class="a" style="left:0px;top:635.5px;width:1080px;height:18px;background:#007acc;"></div>
<div class="a" style="left:1px;top:635.5px;width:26px;height:18px;background:#16825d;"></div>
<svg class="a" style="left:9px;top:638.8px;" width="9" height="11" viewBox="0 0 9 11"><path d="M.7 3.4 4.4 6.9.7 10.3M8.1.6 5 3.8 8.1 7" fill="none" stroke="#ffffff" stroke-width="1"/></svg>
<svg class="a" style="left:33px;top:638.4px;" width="11" height="11" viewBox="0 0 11 11"><g fill="none" stroke="#fff" stroke-width="1"><path d="M4 7 2.2 5.2C3.4 2.4 6.4.8 10 1c.2 3.6-1.4 6.6-4.2 7.8z"/><circle cx="7" cy="4" r="1"/><path d="M2.4 5.4.8 5.6 2.6 3.4M5.8 8.8 5.4 10.2 7.6 8.4M1 10l1.6-1.6"/></g></svg>
<svg class="a" style="left:45px;top:639px;" width="10" height="10" viewBox="0 0 10 10"><g fill="none" stroke="#fff" stroke-width="1"><rect x="4.6" y=".9" width="4.2" height="3.6" rx="1.6" transform="rotate(45 6.7 2.7) translate(.4 -.2)"/><rect x="1" y="5.4" width="4.2" height="3.6" rx="1.6" transform="rotate(45 3.1 7.2) translate(.2 -.2)"/><path d="M3.6 6.4 6.4 3.6"/></g></svg>
<span class="a t" style="letter-spacing:-0.113px;top:637.50px;font-size:9.3px;line-height:14px;color:#ffffff;left:58px;">Launchpad</span>
<svg class="a" style="left:117px;top:638.8px;" width="10" height="10" viewBox="0 0 10 10"><g fill="none" stroke="#fff" stroke-width=".95"><circle cx="5" cy="5" r="4.3"/><path d="M3.2 3.2 6.8 6.8M6.8 3.2 3.2 6.8"/></g></svg>
<span class="a t" style="letter-spacing:-0.172px;top:637.50px;font-size:9.3px;line-height:14px;color:#ffffff;left:129.6px;">0</span>
<svg class="a" style="left:138.3px;top:638.8px;" width="10" height="10" viewBox="0 0 10 10"><g fill="none" stroke="#fff" stroke-width=".95" stroke-linejoin="round"><path d="M5 .9 9.4 9H.6z"/><path d="M5 3.8V6.4M5 7.2V8"/></g></svg>
<span class="a t" style="letter-spacing:-0.172px;top:637.50px;font-size:9.3px;line-height:14px;color:#ffffff;left:151px;">0</span>
<svg class="a" style="left:170px;top:638.6px;" width="10" height="10.4" viewBox="0 0 10 10.4"><g fill="none" stroke="#fff" stroke-width=".95"><circle cx="5" cy="3.6" r="1.1"/><path d="M5 4.8 2.6 10M5 4.8 7.4 10M3.4 8h3.2"/><path d="M2.8 1.2A3.4 3.4 0 0 0 2.8 6M7.2 1.2A3.4 3.4 0 0 1 7.2 6M1.3.3A5 5 0 0 0 1.3 6.9M8.7.3A5 5 0 0 1 8.7 6.9"/></g></svg>
<span class="a t" style="letter-spacing:-0.172px;top:637.50px;font-size:9.3px;line-height:14px;color:#ffffff;left:182.4px;">0</span>
<div class="a" style="left:531.7px;top:635.5px;width:83px;height:18px;background:#7a6400;"></div>
<svg class="a" style="left:539.2px;top:641px;" width="12" height="6.6" viewBox="0 0 12 6.6"><path d="M0 6.6 5.2 0H7.6L2.6 6.6zM4.6 6.6 8.6 0H10.8L11.9 6.6H9.7L9.3 2.6 7 6.6z" fill="#fff"/></svg>
<span class="a t" style="letter-spacing:-0.050px;top:637.50px;font-size:9.3px;line-height:14px;color:#ffffff;left:553.7px;">MarsCode AI</span>
<span class="a t" style="letter-spacing:-0.153px;top:637.50px;font-size:9.3px;line-height:14px;color:#ffffff;left:621.6px;">Ln 34, Col 9</span>
<span class="a t" style="letter-spacing:-0.351px;top:637.50px;font-size:9.3px;line-height:14px;color:#ffffff;left:682.8px;">Spaces: 4</span>
<span class="a t" style="letter-spacing:-0.349px;top:637.50px;font-size:9.3px;line-height:14px;color:#ffffff;left:733.9px;">UTF-8</span>
<span class="a t" style="letter-spacing:-0.945px;top:637.50px;font-size:9.3px;line-height:14px;color:#ffffff;left:771.5px;">CRLF</span>
<svg class="a" style="left:803.8px;top:639.6px;" width="11" height="9.6" viewBox="0 0 11 9.6"><g fill="none" stroke="#fff" stroke-width="1.05"><path d="M2.9.4C1.7.6 1.6 1.4 1.6 2.4V3.4C1.6 4.2 1.2 4.6.5 4.7 1.2 4.8 1.6 5.2 1.6 6V7.2C1.6 8.2 1.7 9 2.9 9.2"/><path d="M6.6.4C7.8.6 8.1 1.4 8.1 2.6V5.6"/><circle cx="7.6" cy="7.4" r="1.6"/></g></svg>
<span class="a t" style="letter-spacing:-0.167px;top:637.50px;font-size:9.3px;line-height:14px;color:#ffffff;left:819px;">vue</span>
<div class="a" style="left:838.9px;top:635.5px;width:26.2px;height:18px;background:#7a6400;"></div>
<svg class="a" style="left:845.8px;top:638.6px;" width="11.6" height="12" viewBox="0 0 11.6 12"><g fill="none" stroke="#fff" stroke-width="1.35" stroke-linejoin="round"><path d="M5.8 1 10 3.4V8.4L5.8 10.8 1.6 8.4V3.4z"/><path d="M2.6 4H9L5.6 9.8z" stroke-width="1.1"/></g></svg>
<svg class="a" style="left:871.4px;top:641px;" width="11" height="7.4" viewBox="0 0 11 7.4"><g fill="none" stroke="#fff" stroke-width="1.3"><path d="M3.4.5.8 3.7 3.4 6.9M7.6.5 10.2 3.7 7.6 6.9M6.7.6 4.3 6.8"/></g></svg>
<span class="a t" style="letter-spacing:-0.838px;top:637.50px;font-size:9.3px;line-height:14px;color:#ffffff;left:885px;">CODEGEEX</span>
<span class="a t" style="letter-spacing:-0.091px;top:637.50px;font-size:9.3px;line-height:14px;color:#ffffff;left:943.6px;">Cursor Tab</span>
<svg class="a" style="left:1000px;top:640px;" width="12" height="7.6" viewBox="0 0 12 7.6"><g fill="none" stroke="#fff" stroke-width=".95"><path d="M.6 4.6 2.6 6.8 7.4.6M5 5.6 6.2 6.8 11.4.6"/></g></svg>
<span class="a t" style="letter-spacing:-0.021px;top:637.50px;font-size:9.3px;line-height:14px;color:#ffffff;left:1014px;">Prettier</span>
<svg class="a" style="left:1058.6px;top:639.2px;" width="9.4" height="10" viewBox="0 0 9.4 10"><g fill="none" stroke="#fff" stroke-width=".95"><path d="M5.2 1A3 3 0 0 0 1.6 4V6.6L.8 8H7.6L6.8 6.6V5.2"/><path d="M3.2 8.2A1.1 1.1 0 0 0 5.2 8.2"/></g><circle cx="7" cy="2.2" r="1.7" fill="#fff"/></svg>
</div><div style="position:absolute;left:0;top:0;right:0;bottom:0;border:1px solid rgba(16,16,16,.55);border-radius:7px;"></div></div></body></html>
